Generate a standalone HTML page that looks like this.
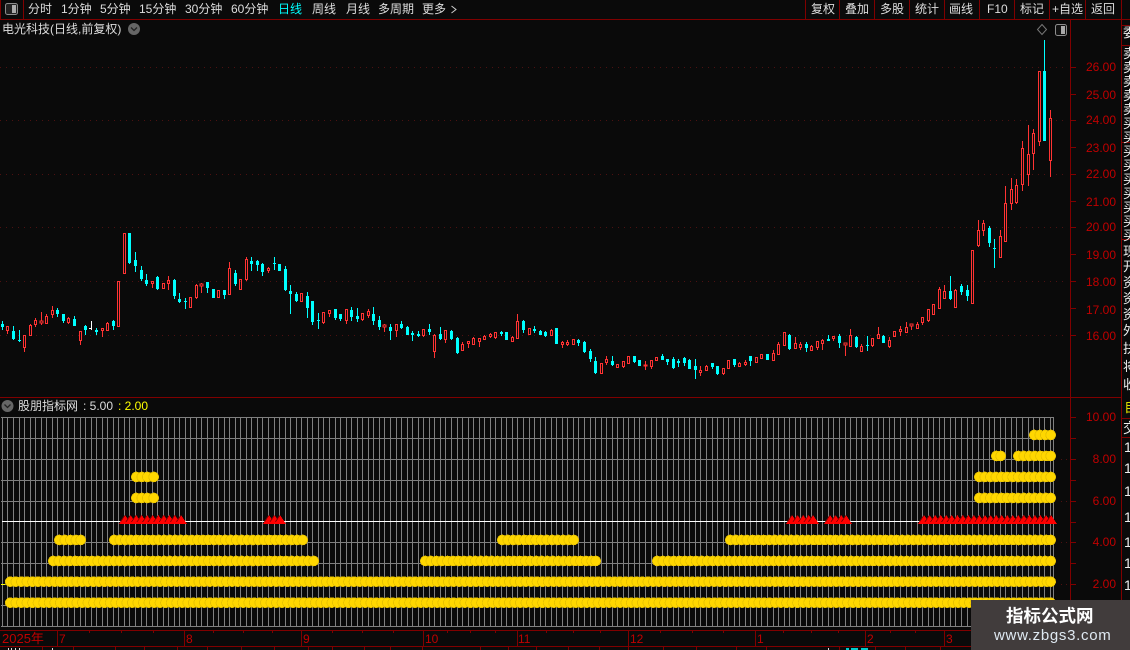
<!DOCTYPE html>
<html><head><meta charset="utf-8">
<style>
html,body{margin:0;padding:0;background:#0a0a0a}
#p{position:relative;width:1130px;height:650px;overflow:hidden;background:#0a0a0a;font:12px/14px "Liberation Sans","WenQuanYi Zen Hei","Noto Sans CJK SC",sans-serif;color:#ddd}
#p svg{position:absolute;left:0;top:0}
.t{position:absolute;top:2px;white-space:nowrap;color:#ddd}
.a{position:absolute;white-space:nowrap;color:#c00000;line-height:14px}
.r{right:14px;text-align:right}
.s{position:absolute;left:1123px;white-space:nowrap;color:#eee;font-size:13px;line-height:14px}
</style></head><body>
<div id="p">
<svg id="g" width="1130" height="650" viewBox="0 0 1130 650" shape-rendering="crispEdges"></svg>

<span class="t" style="left:28px">分时</span><span class="t" style="left:61px">1分钟</span><span class="t" style="left:100px">5分钟</span><span class="t" style="left:139px">15分钟</span><span class="t" style="left:185px">30分钟</span><span class="t" style="left:231px">60分钟</span><span class="t" style="left:278px;color:#0ff">日线</span><span class="t" style="left:312px">周线</span><span class="t" style="left:346px">月线</span><span class="t" style="left:378px">多周期</span><span class="t" style="left:422px">更多</span>
<span class="t" style="left:811px">复权</span><span class="t" style="left:845px">叠加</span><span class="t" style="left:880px">多股</span><span class="t" style="left:915px">统计</span><span class="t" style="left:949px">画线</span><span class="t" style="left:987px">F10</span><span class="t" style="left:1020px">标记</span><span class="t" style="left:1052px">+自选</span><span class="t" style="left:1091px">返回</span>

<span class="t" style="left:2px;top:22px">电光科技(日线,前复权)</span>
<span class="t" style="left:18px;top:399px">股朋指标网</span><span class="t" style="left:83px;top:399px">: 5.00</span><span class="t" style="left:118px;top:399px;color:#ff0">: 2.00</span>

<span class="a r" style="top:60px">26.00</span><span class="a r" style="top:88px">25.00</span><span class="a r" style="top:113px">24.00</span><span class="a r" style="top:141px">23.00</span><span class="a r" style="top:167px">22.00</span><span class="a r" style="top:195px">21.00</span><span class="a r" style="top:220px">20.00</span><span class="a r" style="top:248px">19.00</span><span class="a r" style="top:275px">18.00</span><span class="a r" style="top:303px">17.00</span><span class="a r" style="top:329px">16.00</span>
<span class="a r" style="top:410px">10.00</span><span class="a r" style="top:452px">8.00</span><span class="a r" style="top:494px">6.00</span><span class="a r" style="top:535px">4.00</span><span class="a r" style="top:577px">2.00</span>

<span class="a" style="left:2px;top:632px;font-size:13px">2025年</span><span class="a" style="left:59px;top:632px">7</span><span class="a" style="left:186px;top:632px">8</span><span class="a" style="left:303px;top:632px">9</span><span class="a" style="left:425px;top:632px">10</span><span class="a" style="left:518px;top:632px">11</span><span class="a" style="left:630px;top:632px">12</span><span class="a" style="left:757px;top:632px">1</span><span class="a" style="left:867px;top:632px">2</span><span class="a" style="left:946px;top:632px">3</span>

<div style="position:absolute;left:1122px;top:20px;width:8px;height:378px;overflow:hidden">
<span class="s" style="left:1px;top:6px">委</span><span class="s" style="left:1px;top:27px">卖</span><span class="s" style="left:1px;top:41px">卖</span><span class="s" style="left:1px;top:55px">卖</span><span class="s" style="left:1px;top:69px">卖</span><span class="s" style="left:1px;top:83px">卖</span><span class="s" style="left:1px;top:97px">买</span><span class="s" style="left:1px;top:111px">买</span><span class="s" style="left:1px;top:125px">买</span><span class="s" style="left:1px;top:139px">买</span><span class="s" style="left:1px;top:153px">买</span><span class="s" style="left:1px;top:167px">买</span><span class="s" style="left:1px;top:181px">买</span><span class="s" style="left:1px;top:195px">买</span><span class="s" style="left:1px;top:209px">买</span><span class="s" style="left:1px;top:225px">现</span><span class="s" style="left:1px;top:240px">开</span><span class="s" style="left:1px;top:256px">资</span><span class="s" style="left:1px;top:272px">资</span><span class="s" style="left:1px;top:288px">资</span><span class="s" style="left:1px;top:304px">外</span><span class="s" style="left:1px;top:322px">扶</span><span class="s" style="left:1px;top:340px">将</span><span class="s" style="left:1px;top:358px">收</span>
</div>
<div style="position:absolute;left:1122px;top:398px;width:8px;height:202px;overflow:hidden;font-size:14px;line-height:16px;color:#eee">
<span style="position:absolute;left:2px;top:1px;color:#dd0">自</span><span style="position:absolute;left:1px;top:22px">交</span>
<span style="position:absolute;left:2px;top:41px">1</span><span style="position:absolute;left:2px;top:62px">1</span><span style="position:absolute;left:2px;top:85px">1</span><span style="position:absolute;left:2px;top:111px">1</span><span style="position:absolute;left:2px;top:136px">1</span><span style="position:absolute;left:2px;top:157px">1</span><span style="position:absolute;left:2px;top:179px">1</span>
</div>

<div style="position:absolute;left:971px;top:600px;width:159px;height:50px;background:#413c3c"></div>
<div style="position:absolute;left:1006px;top:605px;white-space:nowrap;color:#fff;font:700 17.5px/21px 'Noto Sans CJK SC',sans-serif">指标公式网</div>
<div style="position:absolute;left:994px;top:627px;white-space:nowrap;color:#dfe9f2;font:15px/18px 'Liberation Sans',sans-serif;letter-spacing:.7px">www.zbgs3.com</div>
</div>
<script>
(function(){
var Z=[
[220,0,"c304,312,318,327 r319,319,330,339 c318,333,355,357 c330,360,362,365 r345,345,381,393 r312,316,347,347 r294,300,312,320 r277,304,306,312 r282,289,311,311 r258,270,282,291 c264,270,279,288 c282,282,300,306 r293,296,306,309 c288,297,315,315 r334,334,362,372 c315,318,327,342 w303,325,326,327 c324,330,333,342 r324,324,330,348 r306,309,330,330 c300,303,315,327 r184,184,320,320 r40,40,161,161 c40,40,126,129 c96,120,135,153 c138,150,174,180 c162,180,189,195 r183,184,191,201 c168,171,204,207 r190,190,206,206 r168,180,191,207 c177,180,225,234 c219,237,243,246 c234,243,245,264 r232,232,263,263 r192,195,231,234 r189,192,197,216 c186,186,201,216 c207,207,231,231 r210,210,233,233 c210,210,222,234 r126,145,224,224 c150,159,189,195 r178,178,209,209 r111,117,177,180 c111,123,129,150 c120,123,132,150 c129,132,153,165 r141,144,150,156 c111,129,131,147 c132,132,150,150 c138,147,207,210 c195,213,219,279 c216,222,240,243 r220,220,243,243 c216,228,261,291 c243,243,303,312 c279,300,302,324"],
[290,58,"r66,66,96,99 r60,60,69,78 c57,57,81,87 c72,72,84,90 r57,57,90,99 c51,60,78,90 c54,78,84,93 r69,69,87,90 r57,63,75,81 c51,72,90,102 c78,90,108,117 r102,105,108,123 c102,111,120,147 r102,102,120,138 c93,102,111,114 c108,111,132,132 c123,129,132,150 c123,132,135,138 r117,117,135,138 c102,117,123,132 r132,135,183,201 c111,132,144,147 r120,120,147,156 c120,123,144,147 c141,144,186,189 r156,162,180,180 r153,153,159,171 r141,144,162,162 r144,144,153,168 r135,138,147,147 r129,132,138,141 r126,126,141,144 c123,126,130,135 c126,126,147,147 r138,141,153,153 r72,93,144,144 c90,93,117,126 r114,114,132,132 c108,117,120,126 c120,123,132,132 c123,126,135,138 r117,120,135,135 c114,114,159,159 r153,156,162,171 r150,156,162,165 r147,147,162,162 c147,150,156,165 c153,156,183,186 c177,183,204,213 c201,213,246,249 r219,219,249,249 r198,207,216,222 c198,213,222,225 r222,222,231,231 r213,213,228,231 r198,198,219,219 c198,198,213,216 c210,210,225,225"],
[290,116,"r213,225,227,237 r210,210,228,234 r202,202,210,210 c192,198,207,207 c207,207,213,222 c201,207,231,234 c207,213,216,228 c201,204,216,225 c207,210,234,234 c207,228,237,264 r228,240,246,255 r225,228,240,240 c219,219,228,234 c228,228,249,252 r234,234,249,252 r210,210,234,234 c207,207,222,228 r216,219,228,228 r210,216,222,225 c198,198,210,225 r201,201,216,216 r192,192,204,204 c192,192,207,207 r180,189,210,210 r156,162,192,192 r126,126,165,165 c132,135,174,177 r141,159,174,174 r156,162,171,177 c156,162,171,183 r165,168,180,180 r153,153,171,177 r147,150,159,177 c135,148,150,150 r138,138,144,150 c132,138,156,171 r159,161,162,195 r117,135,168,168 c138,141,168,171 r162,168,183,183 c138,165,167,180 r144,144,165,168 r111,132,144,144 c135,138,156,156 r141,150,168,171 r123,123,138,138 r108,117,123,135 r96,111,126,126 r102,102,105,117 r96,102,114,114 r81,81,96,102 r57,57,90,93 r42,42,72,72"],
[120,169,"r502,507,566,566 r495,514,536,536 c468,513,535,537 r507,512,563,563 c492,498,513,522 c495,510,527,540 r391,391,550,550 r300,330,375,378 r300,309,332,345 c318,324,366,378 c357,384,386,441 r330,348,413,413 r198,249,365,365 r175,207,250,268 r178,195,246,249 r63,84,192,210 r15,102,163,195 r27,39,100,147"],
[0,187,"r213,213,423,435 c120,213,420,420 r330,354,482,528"]
];
var RED='#ff3333',CY='#00ffff',o={r:'',c:'',w:''};
function X(i){return Math.floor(2.4+5.544*i)}
Z.forEach(function(g){
 g[2].split(' ').forEach(function(s,k){
  var t=s[0],v=s.slice(1).split(',').map(function(n){return Math.floor(g[0]+n/3)}),x=X(g[1]+k),w=x+.5;
  var hi=v[0],top=v[1],bot=v[2],lo=v[3],d='';
  if(hi<top)d+='M'+w+' '+hi+'V'+top;
  if(lo>bot)d+='M'+w+' '+(bot+1)+'V'+(lo+1);
  if(t=='r'){
   if(bot-top<2)d+='M'+(x-1)+' '+top+'h3v'+(bot-top+1)+'h-3z';
   else d+='M'+(x-.5)+' '+(top+.5)+'h2v'+(bot-top)+'h-2z';
  }else if(t=='c'){
   o.f=(o.f||'')+'M'+(x-1)+' '+top+'h3v'+Math.max(1,bot-top+1)+'h-3z';
  }else{
   d+='M'+(x-2)+' '+(bot+.5)+'h3';
  }
  o[t]+=d;
 });
});
var G='';
function L(x1,y1,x2,y2,c,extra){return '<line x1="'+x1+'" y1="'+y1+'" x2="'+x2+'" y2="'+y2+'" stroke="'+c+'" '+(extra||'')+'/>'}
var DR='#800000';
[67,120,174,227,281,335].forEach(function(y){G+=L(0,y+.5,1067,y+.5,'#4d1111','stroke-dasharray="1 5"')});
[459,501,542,584].forEach(function(y){G+=L(1061,y+.5,1067,y+.5,'#4d1111','stroke-dasharray="1 4"')});
var gp='';
[417,438,459,480,501,542,563,584,605,626].forEach(function(y){gp+='M1 '+(y+.5)+'H1054'});
for(var i=0;i<190;i++){gp+='M'+(X(i)+.5)+' 417V627'}
gp+='M1053.5 417V627';
G+='<path d="'+gp+'" stroke="#808080" fill="none"/>';
G+='<rect x="2" y="521" width="1052" height="1" fill="#fff"/>';
G+='<rect x="1" y="584" width="4" height="1" fill="#ff0"/>';
G+='<path d="'+o.r+'" stroke="'+RED+'" fill="none"/><path d="'+o.c+'" stroke="'+CY+'" fill="none"/><path d="'+(o.f||'')+'" fill="'+CY+'"/><path d="'+o.w+'" stroke="#fff" fill="none"/>';
var T=[[119,187],[263,286],[786,819],[824,852],[918,1057]],S='';
T.forEach(function(r){
 var c=r[0]+6,e=r[1]-6,list=[];
 for(;c<e-1;c+=5.544)list.push(c);list.push(e);
 list.forEach(function(c){
  S+='<path d="M'+(c-6).toFixed(1)+' 524L'+c.toFixed(1)+' 515L'+(c+6).toFixed(1)+' 524Z" fill="#ff0000"/>';
  S+='<path d="M'+(c-4.6).toFixed(1)+' 522L'+(c-.3).toFixed(1)+' 515.6" stroke="#8a0000" stroke-width=".9" fill="none"/>';
 });
});
var D=[[602.7,[[5,1056]]],[581.7,[[5,1056]]],[561,[[48,319],[420,601],[652,1056]]],[540,[[54,86],[109,308],[497,579],[725,1056]]],[498,[[131,159],[974,1056]]],[477,[[131,159],[974,1056]]],[456,[[991,1006],[1013,1056]]],[435,[[1029,1056]]]],C='',Rd=4.9;
D.forEach(function(r){
 r[1].forEach(function(s){
  var e=s[1]-5.3,c=s[0]+5.3,list=[];
  for(;c<e-1.5;c+=5.544)list.push(c);list.push(e);
  list.forEach(function(c){
   C+='<circle cx="'+c.toFixed(1)+'" cy="'+r[0]+'" r="'+Rd+'" fill="#ffd700" stroke="#e6c000" stroke-width=".8"/>';
  });
 });
});
G+=S+C;
var F='';
[805,839,874,909,944,979,1014,1049,1085,1121].forEach(function(x){F+='M'+(x+.5)+' 0V19'});
F+='M0 19.5H1130M0 397.5H1121M0.5 0V19M23.5 0V19M1070.5 19V630M1121.5 0V630M0 630.5H971M0 646.5H971';
F+='M1122 25.5H1130M1122 45.5H1130M1122 142.5H1130M1122 239.5H1130M1122 418.5H1130M1122 437.5H1130';
[57,184,301,423,517,628,755,865,944].forEach(function(x){F+='M'+(x+.5)+' 630V646'});
[89,121,153,213,243,272,332,362,393,447,470,495,546,573,600,660,692,723,783,811,838,890,915].forEach(function(x){F+='M'+(x+.5)+' 631V633'});
[42,73,115,144,177,207,241,274,308,332,364,390,422,480,508,536,568,599,628,663,696,736,766,839,875,905,940].forEach(function(x){F+='M'+(x+.5)+' 647V650'});
[67,94,120,147,174,201,227,254,281,308,335].forEach(function(y){F+='M1071 '+(y+.5)+'H1076'});
[417,438,459,480,501,522,542,563,584,605].forEach(function(y){F+='M1071 '+(y+.5)+'H1076'});
G+='<path d="'+F+'" stroke="'+DR+'" fill="none"/>';
G+='<path d="M8 648h1v2h-1zM11 648h1v2h-1zM15 648h1v2h-1zM19 648h1v2h-1zM52 648h1v2h-1zM828 648h1v2h-1z" fill="#ddd"/>';
G+='<path d="M846 648h3v2h-3zM851 648h7v2h-7zM861 648h7v2h-7z" fill="#0cc"/>';
G+='<g shape-rendering="auto">';
G+='<rect x="5.5" y="3.5" width="12" height="11" rx="2" fill="#222" stroke="#8c8c8c"/><rect x="12" y="5" width="4" height="8" fill="#aaa"/>';
G+='<rect x="1055.5" y="24.500" width="11" height="11" rx="2" fill="#111" stroke="#8c8c8c"/><rect x="1061" y="26" width="4" height="8" fill="#aaa"/>';
G+='<path d="M1042 24.5L1046.5 29.5L1042 34.5L1037.5 29.5Z" fill="none" stroke="#777"/>';
G+='<circle cx="134" cy="29" r="6" fill="#666"/><path d="M131 27.5L134 30.5L137 27.5" fill="none" stroke="#222" stroke-width="1.3"/>';
G+='<circle cx="7.5" cy="406" r="6" fill="#666"/><path d="M4.5 404.5L7.5 407.5L10.5 404.5" fill="none" stroke="#222" stroke-width="1.3"/>';
G+='<path d="M451.500 6L456 9.500L451.500 13" fill="none" stroke="#ccc" stroke-width="1"/>';
G+='</g>';
document.getElementById('g').innerHTML=G;
})();
</script>
</body></html>
